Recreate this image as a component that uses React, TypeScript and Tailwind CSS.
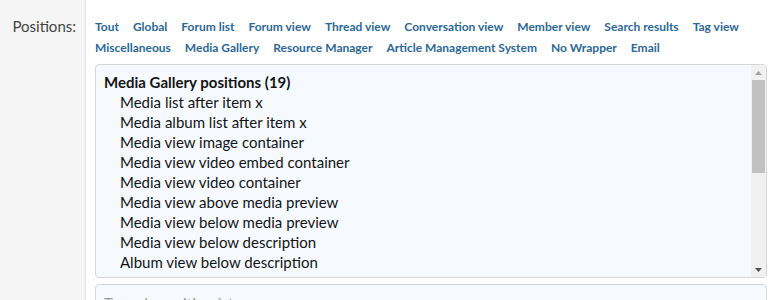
const tabsRow1 = ['Tout', 'Global', 'Forum list', 'Forum view', 'Thread view', 'Conversation view', 'Member view', 'Search results', 'Tag view'];
const tabsRow2 = ['Miscellaneous', 'Media Gallery', 'Resource Manager', 'Article Management System', 'No Wrapper', 'Email'];

const positions = [
  'Media list after item x',
  'Media album list after item x',
  'Media view image container',
  'Media view video embed container',
  'Media view video container',
  'Media view above media preview',
  'Media view below media preview',
  'Media view below description',
  'Album view below description',
  'Media view sidebar',
];

const App = () => {
  return (
    <div className="flex h-[300px] w-[777px] overflow-hidden bg-white font-['Lato',sans-serif] text-[#141414]">
      {/* Label column */}
      <div className="w-[86px] shrink-0 border-r border-[#e3e3e3] bg-[#f5f5f5] pr-[9px] pt-[15px] text-right text-[15px] text-[#444]">
        Positions:
      </div>

      {/* Content */}
      <div className="flex flex-1 flex-col pl-[9px] pr-[10px] pt-[19px]">
        <div className="flex flex-col gap-[5px] text-[12px] font-bold leading-[16px] text-[#2b6898]">
          <div className="flex gap-[14px]">
            {tabsRow1.map((t) => (
              <a key={t} className="cursor-pointer">{t}</a>
            ))}
          </div>
          <div className="flex gap-[14px]">
            {tabsRow2.map((t) => (
              <a key={t} className="cursor-pointer">{t}</a>
            ))}
          </div>
        </div>

        {/* List box */}
        <div className="mt-[8px] flex h-[214px] shrink-0 overflow-hidden rounded-[4px] border border-[#d6d6d6] bg-[#f6faff]">
          <div className="flex-1 overflow-hidden pl-[8px] pt-[7px] text-[15px] leading-[20px]">
            <div className="font-bold">Media Gallery positions (19)</div>
            {positions.map((p) => (
              <div key={p} className="pl-[16px]">{p}</div>
            ))}
          </div>
          <div className="flex w-[15px] shrink-0 flex-col bg-[#f1f1f1]">
            <div className="flex h-[15px] items-center justify-center">
              <svg width="7" height="4" viewBox="0 0 7 4"><path d="M3.5 0L7 4H0z" fill="#a3a3a3" /></svg>
            </div>
            <div className="mx-[1px] h-[93px] bg-[#c1c1c1]" />
            <div className="flex-1" />
            <div className="flex h-[15px] items-center justify-center">
              <svg width="7" height="4" viewBox="0 0 7 4"><path d="M0 0H7L3.5 4z" fill="#505050" /></svg>
            </div>
          </div>
        </div>

        {/* Search input */}
        <div className="mt-[6px] h-[36px] shrink-0 rounded-[4px] border border-[#d6d6d6] bg-[#f6faff] px-[8px] pt-[7px] text-[15px] text-[#9a9a9a]">
          Type de position à trouver
        </div>
      </div>
    </div>
  );
};

export default App;
